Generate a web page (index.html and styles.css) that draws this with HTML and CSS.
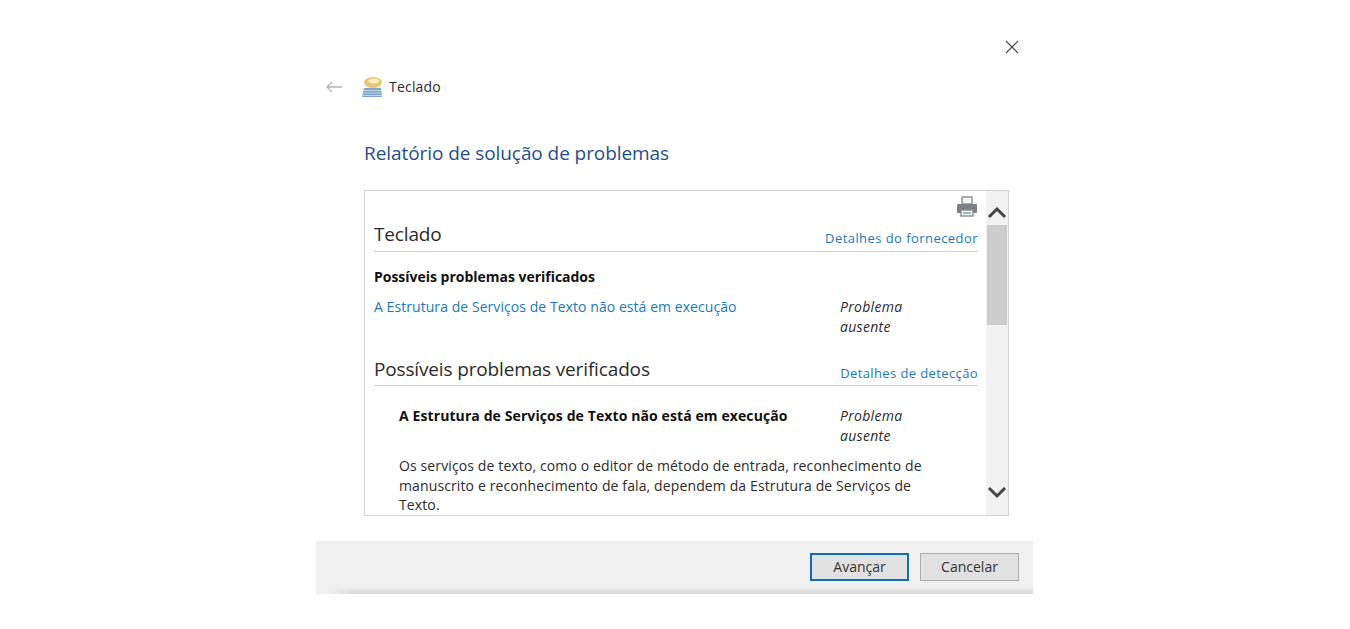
FILE: index.html
```html
<!DOCTYPE html>
<html lang="pt-br">
<head>
  <meta charset="UTF-8">
  <meta name="viewport" content="width=device-width, initial-scale=1.0">
  <title>Teclado</title>
  <link rel="stylesheet" href="styles.css">
</head>
<body>

  <div class="dialog">
    <div class="close-row">
      <svg class="close-icon" width="14" height="14" viewBox="0 0 14 14"><path d="M1 1 13 13M13 1 1 13" stroke="#444" stroke-width="1.1" fill="none"/></svg>
    </div>

    <div class="nav-row">
      <svg class="back-icon" width="18" height="12" viewBox="0 0 18 12"><path d="M17 6H2M7 1 2 6l5 5" stroke="#b4b4b4" stroke-width="1.3" fill="none"/></svg>
      <svg class="app-icon" width="22" height="22" viewBox="0 0 22 22">
        <ellipse cx="12" cy="6.5" rx="9" ry="5.5" fill="#e8c870"/>
        <ellipse cx="12.5" cy="5" rx="5.5" ry="2.6" fill="#f9efc4"/>
        <path d="M3 12H20L21 21H1Z" fill="#7ea5cf"/>
        <path d="M3 14.5H20M2 17H20M2 19.5H21" stroke="#c2d5e8" stroke-width="1"/>
      </svg>
      <span class="nav-title">Teclado</span>
    </div>

    <h1 class="page-title">Relatório de solução de problemas</h1>

    <div class="report-box">
      <div class="report">
        <div class="print-row">
          <svg width="22" height="22" viewBox="0 0 22 22">
            <rect x="6" y="1" width="10" height="7" fill="#f4f4f4" stroke="#8b8e90" stroke-width="1.4"/>
            <rect x="1" y="8" width="20" height="9" rx="1" fill="#7d8184"/>
            <rect x="5" y="14" width="12" height="6" fill="#f4f4f4" stroke="#8b8e90" stroke-width="1.4"/>
            <path d="M7 17H15" stroke="#6fa9b4" stroke-width="1.4"/>
          </svg>
        </div>

        <div class="section-head first">
          <h2>Teclado</h2>
          <a class="link spaced">Detalhes do fornecedor</a>
        </div>
        <p class="sub-head">Possíveis problemas verificados</p>
        <div class="issue-row">
          <a class="link issue-name">A Estrutura de Serviços de Texto não está em execução</a>
          <em class="issue-status">Problema ausente</em>
        </div>

        <div class="section-head second">
          <h2>Possíveis problemas verificados</h2>
          <a class="link spaced">Detalhes de detecção</a>
        </div>
        <div class="issue-row detail">
          <strong class="issue-name">A Estrutura de Serviços de Texto não está em execução</strong>
          <em class="issue-status">Problema ausente</em>
        </div>
        <p class="description">Os serviços de texto, como o editor de método de entrada, reconhecimento de manuscrito e reconhecimento de fala, dependem da Estrutura de Serviços de Texto.</p>
      </div>

      <div class="scrollbar">
        <svg class="arrow" width="20" height="14" viewBox="0 0 20 14"><path d="M2 12 10 4l8 8" stroke="#444" stroke-width="3" fill="none"/></svg>
        <div class="track"><div class="thumb"></div></div>
        <svg class="arrow" width="20" height="14" viewBox="0 0 20 14"><path d="M2 2l8 8 8-8" stroke="#444" stroke-width="3" fill="none"/></svg>
      </div>
    </div>

    <div class="footer">
      <button class="btn primary">Avançar</button>
      <button class="btn">Cancelar</button>
    </div>
  </div>

</body>
</html>
```

FILE: styles.css
```css
body {
  font-family: "Open Sans", "Noto Sans", sans-serif;
  margin: 0;
  padding: 0;
  background-color: #fff;
  color: #2b2b2b;
}
.dialog {
  width: 717px;
  margin-left: 316px;
  padding-top: 40px;
}
.close-row {
  display: flex;
  justify-content: flex-end;
  padding-right: 14px;
  height: 30px;
}
.nav-row {
  display: flex;
  align-items: center;
  height: 33px;
  padding-left: 9px;
}
.app-icon {
  margin-left: 18px;
}
.nav-title {
  margin-left: 6px;
  font-size: 14px;
  letter-spacing: 0.2px;
}
.page-title {
  margin: 36px 0 0 48px;
  height: 28px;
  font-size: 19px;
  line-height: 28px;
  font-weight: 400;
  color: #1f4e8c;
  letter-spacing: -0.07px;
}
.report-box {
  display: flex;
  margin: 23px 24px 0 48px;
  height: 324px;
  border: 1px solid #d4d4d4;
  overflow: hidden;
}
.report {
  flex: 1;
  padding: 0 8px 0 9px;
  overflow: hidden;
}
.print-row {
  display: flex;
  justify-content: flex-end;
  height: 31px;
  padding-top: 5px;
  box-sizing: border-box;
}
.section-head {
  display: flex;
  justify-content: space-between;
  align-items: flex-end;
  border-bottom: 1px solid #cfcfcf;
}
.section-head.first {
  height: 29px;
}
.section-head.second {
  height: 33px;
  margin-top: 15px;
}
.section-head.second .link {
  letter-spacing: 0.39px;
}
.section-head h2 {
  margin: 0 0 2px;
  font-size: 19px;
  line-height: 28px;
  font-weight: 400;
  letter-spacing: -0.15px;
}
.section-head.first h2 {
  margin-bottom: 3px;
}
.section-head.first .link {
  margin-bottom: 1px;
}
.link {
  color: #1a78c2;
  font-size: 13px;
}
.spaced {
  letter-spacing: 0.44px;
  line-height: 24px;
}
.sub-head {
  margin: 15px 0 0;
  font-size: 14px;
  line-height: 20px;
  font-weight: 700;
  color: #111;
  letter-spacing: -0.02px;
}
.issue-row {
  display: flex;
  margin-top: 10px;
  font-size: 14px;
  line-height: 20px;
}
.issue-row.detail {
  margin-top: 20px;
  padding-left: 25px;
}
.issue-name {
  flex: 1;
  font-size: 14px;
  letter-spacing: 0.06px;
}
strong.issue-name {
  letter-spacing: 0.1px;
  color: #111;
}
.issue-status {
  width: 75px;
  margin-right: 63px;
  letter-spacing: 0.3px;
}
.description {
  margin: 10px 50px 0 25px;
  font-size: 14px;
  line-height: 19.5px;
  letter-spacing: 0.12px;
}
.scrollbar {
  display: flex;
  flex-direction: column;
  width: 22px;
  background-color: #f1f1f1;
}
.arrow {
  flex: none;
  margin: 14px 1px 0;
}
.arrow:last-child {
  margin: 8px 1px 15px;
}
.track {
  flex: 1;
  padding: 6px 1px 0;
}
.thumb {
  width: 20px;
  height: 100px;
  background-color: #cdcdcd;
}
.footer {
  display: flex;
  justify-content: flex-end;
  gap: 11px;
  height: 53px;
  margin-top: 25px;
  padding: 12px 14px 0 0;
  box-sizing: border-box;
  background: linear-gradient(to right, #f0f0f0 12px, rgba(240, 240, 240, 0) 36px), linear-gradient(to top, #d9d9d9, #f0f0f0 7px);
}
.btn {
  width: 99px;
  height: 28px;
  padding: 0 0 2px;
  font-family: inherit;
  font-size: 14px;
  color: #333;
  background-color: #e1e1e1;
  border: 1px solid #adadad;
}
.btn.primary {
  border: 2px solid #0f6db5;
}
```
